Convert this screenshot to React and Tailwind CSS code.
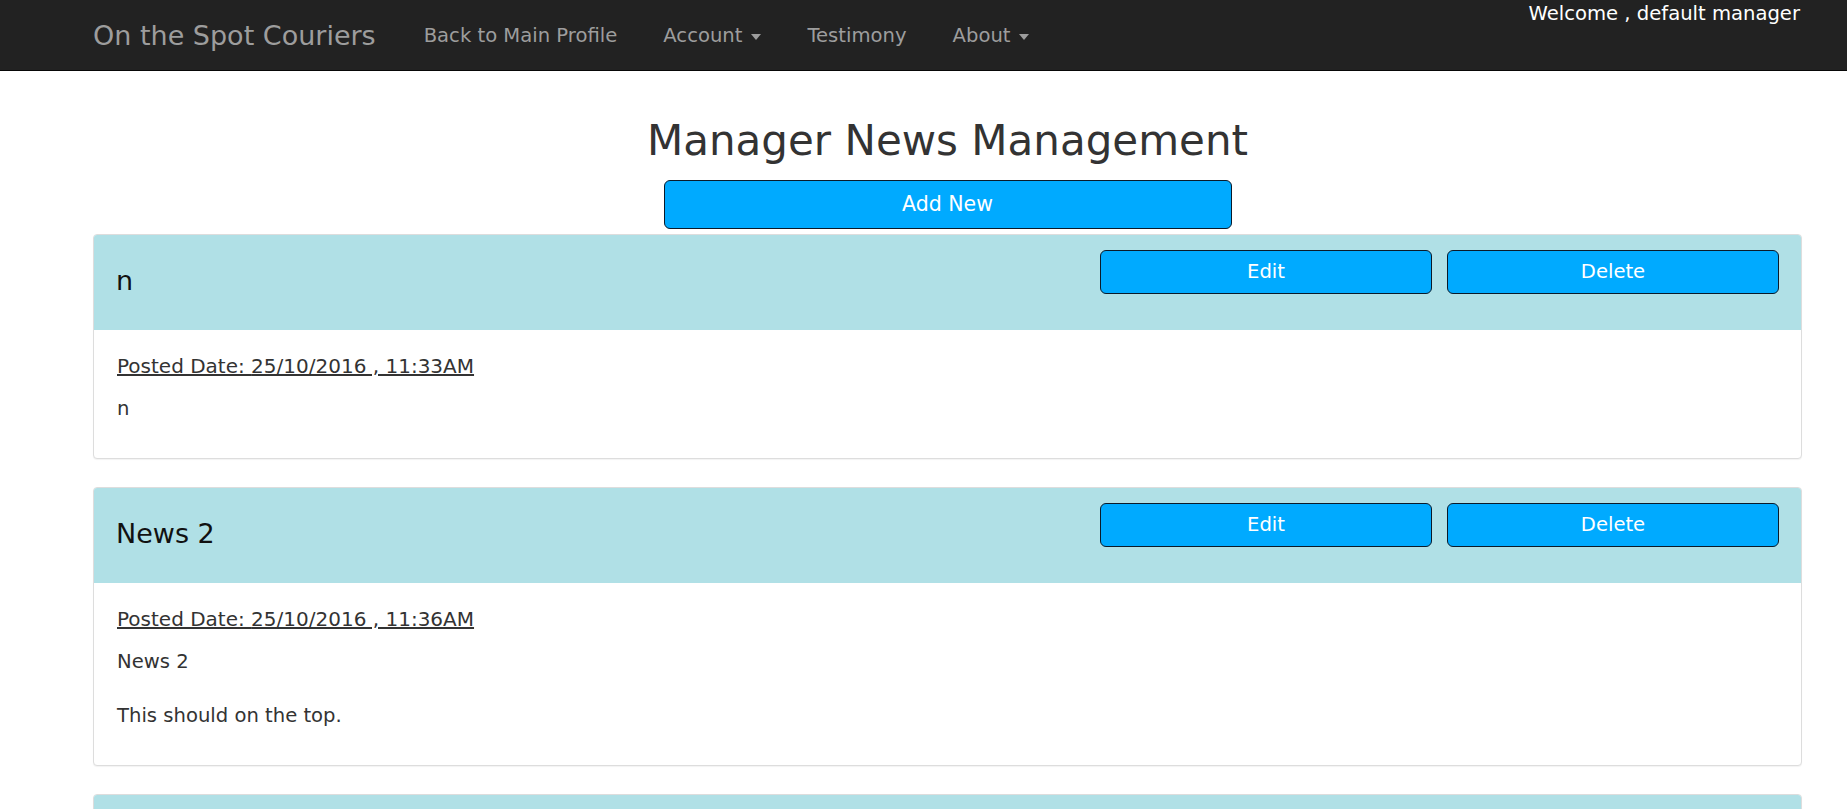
import React from 'react';

const news = [
  { id: 1, title: 'n', posted: '25/10/2016 , 11:33AM', body: ['n'] },
  { id: 2, title: 'News 2', posted: '25/10/2016 , 11:36AM', body: ['News 2', 'This should on the top.'] },
  { id: 3, title: 'News 1', posted: '25/10/2016 , 11:30AM', body: ['News 1'] },
];

const Caret = () => (
  <span className="ml-[9px] inline-block h-0 w-0 border-x-[5px] border-t-[6px] border-x-transparent border-t-[#9d9d9d] align-middle" />
);

const NavBar = () => (
  <nav className="flex h-[71px] items-start justify-between border-b border-[#080808] bg-[#222222] pl-[93px] pr-[47px]">
    <div className="flex h-full items-center pt-[2px]">
      <a className="text-[27px] text-[#9d9d9d]">On the Spot Couriers</a>
      <ul className="ml-[25px] flex items-center">
        <li className="px-[23px] text-[19.6px] text-[#9d9d9d]">Back to Main Profile</li>
        <li className="px-[23px] text-[19.6px] text-[#9d9d9d]">
          Account
          <Caret />
        </li>
        <li className="px-[23px] text-[19.6px] text-[#9d9d9d]">Testimony</li>
        <li className="px-[23px] text-[19.6px] text-[#9d9d9d]">
          About
          <Caret />
        </li>
      </ul>
    </div>
    <div className="pt-[1px] text-[19.6px] leading-[26px] text-white">Welcome , default manager</div>
  </nav>
);

const NewsCard = ({ item }) => (
  <div className="mb-[28px] overflow-hidden rounded-[4px] border border-[#dddddd] bg-white shadow-[0_1px_1px_rgba(0,0,0,0.05)]">
    <div className="flex h-[95px] justify-between bg-[#b0e0e6] px-[22px]">
      <h3 className="self-center pb-[2px] text-[27px] text-[#111111]">{item.title}</h3>
      <div className="flex gap-[15px] self-start pt-[15px]">
        <button className="h-[44px] w-[332px] rounded-[6px] border border-[#0a1a2a] bg-[#00aaff] text-[19.6px] text-white">
          Edit
        </button>
        <button className="h-[44px] w-[332px] rounded-[6px] border border-[#0a1a2a] bg-[#00aaff] text-[19.6px] text-white">
          Delete
        </button>
      </div>
    </div>
    <div className="px-[23px] pt-[23px] pb-[36px] text-[19.6px] leading-[26px] text-[#333333]">
      <div className="text-[20px]">
        <u>Posted Date: {item.posted}</u>
      </div>
      <div className="mt-[17px] flex flex-col gap-[28px]">
        {item.body.map((line, i) => (
          <p key={i}>{line}</p>
        ))}
      </div>
    </div>
  </div>
);

export default function App() {
  return (
    <div className="min-h-screen bg-white font-['DejaVu_Sans','Verdana',sans-serif]">
      <NavBar />
      <main className="pl-[93px] pr-[45px]">
        <h1 className="mt-[37px] text-center text-[42px] leading-[66px] text-[#333333]">Manager News Management</h1>
        <div className="flex justify-center">
          <button className="mt-[6px] h-[49px] w-[568px] rounded-[6px] border border-[#0a1a2a] bg-[#00aaff] text-[20.5px] text-white">
            Add New
          </button>
        </div>
        <div className="mt-[5px]">
          {news.map((item) => (
            <NewsCard key={item.id} item={item} />
          ))}
        </div>
      </main>
    </div>
  );
}
